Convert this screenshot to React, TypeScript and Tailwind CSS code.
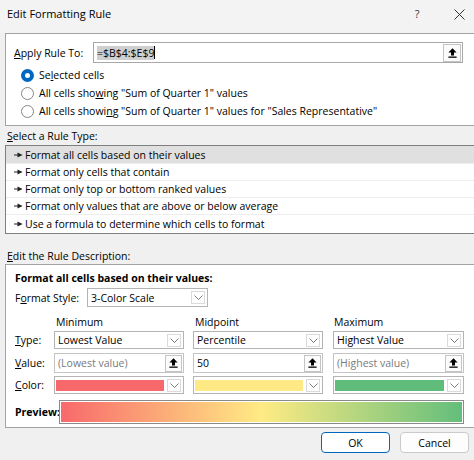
import React from 'react';

const Chevron = () => (
  <svg width="9" height="5" viewBox="0 0 9 5" fill="none">
    <path d="M0.5 0.5 L4.5 4.5 L8.5 0.5" stroke="#6b6b6b" strokeWidth="0.9" />
  </svg>
);

const UpArrow = () => (
  <svg width="9" height="10" viewBox="0 0 9 10">
    <path d="M4.5 0.3 L8.6 4.6 H6 V7.4 H3 V4.6 H0.4 Z" fill="#000" />
    <rect x="0.4" y="8.5" width="8.2" height="1.3" fill="#000" />
  </svg>
);

const Pointer = () => (
  <svg width="9" height="6" viewBox="0 0 9 6">
    <rect x="0" y="2.5" width="4" height="1" fill="#222" />
    <path d="M3.5 0.6 L8.6 3 L3.5 5.4 Z" fill="#222" />
  </svg>
);

const Dropdown = ({ value, width }: { value: string; width: string }) => (
  <div className={`flex items-center h-full bg-white border border-[#b4b4b4] pl-[3px] pr-[2px] ${width}`}>
    <span className="flex-1 truncate">{value}</span>
    <span className="w-[14px] h-[13px] border border-[#dadada] flex items-center justify-center">
      <Chevron />
    </span>
  </div>
);

const ValueBox = ({ value, muted }: { value: string; muted?: boolean }) => (
  <div className="flex items-center h-full w-full bg-white border border-[#c4c4c4] pl-[3px] pr-[1px]">
    <span className={`flex-1 truncate ${muted ? 'text-[#7a7a7a]' : ''}`}>{value}</span>
    <span className="w-[17px] h-[17px] border border-[#c4c4c4] bg-[#fbfbfb] flex items-center justify-center">
      <UpArrow />
    </span>
  </div>
);

const ColorBox = ({ color }: { color: string }) => (
  <div className="flex items-center h-full w-full bg-white border border-[#b4b4b4] pl-[1px] pr-[2px]">
    <span className={`flex-1 h-[11px] ${color}`} />
    <span className="ml-[3px] w-[14px] h-[13px] border border-[#dadada] flex items-center justify-center">
      <Chevron />
    </span>
  </div>
);

const Radio = ({ checked, children }: { checked?: boolean; children: React.ReactNode }) => (
  <div className="flex items-center h-[18px] pl-[7px]">
    {checked ? (
      <span className="w-[13px] h-[13px] rounded-full bg-[#0067c0] flex items-center justify-center">
        <span className="w-[5px] h-[5px] rounded-full bg-white" />
      </span>
    ) : (
      <span className="w-[13px] h-[13px] rounded-full border border-[#858585] bg-white" />
    )}
    <span className="ml-[5px]">{children}</span>
  </div>
);

const ruleTypes = [
  'Format all cells based on their values',
  'Format only cells that contain',
  'Format only top or bottom ranked values',
  'Format only values that are above or below average',
  'Use a formula to determine which cells to format',
];

export default function App() {
  return (
    <div className="w-[474px] h-[460px] overflow-hidden bg-[#f0f0f0] text-black text-[10.5px] leading-[14px] font-['Open_Sans','Noto_Sans',sans-serif] flex flex-col">
      {/* title bar */}
      <div className="h-[33px] shrink-0 flex items-center pl-[7px] pr-[9px] pb-[5px] bg-[#f3f3f3]">
        <span className="text-[11px]">Edit Formatting Rule</span>
        <span className="ml-auto w-[14px] text-center text-[11px] text-[#333]">?</span>
        <span className="ml-[29px] w-[12px] flex items-center justify-center">
          <svg width="11" height="11" viewBox="0 0 11 11">
            <path d="M0.5 0.5 L10.5 10.5 M10.5 0.5 L0.5 10.5" stroke="#333" strokeWidth="1" />
          </svg>
        </span>
      </div>

      {/* apply to */}
      <div className="ml-[5px] h-[93px] shrink-0 border-y border-l border-[#a3a3a3] bg-white pt-[8px] pl-[8px]">
        <div className="flex items-center h-[21px]">
          <span className="w-[79px]">
            <u>A</u>pply Rule To:
          </span>
          <div className="flex-1 mr-[11px] h-full flex items-center border border-[#a8a8a8] bg-white pl-[3px] pr-[1px]">
            <span className="bg-[#cfcfcf]">=$B$4:$E$9</span>
            <span className="w-px h-[13px] bg-black" />
            <span className="flex-1" />
            <span className="w-[18px] h-[18px] border border-[#c4c4c4] bg-[#fbfbfb] flex items-center justify-center">
              <UpArrow />
            </span>
          </div>
        </div>
        <div className="mt-[3px]">
          <Radio checked>
            Se<u>l</u>ected cells
          </Radio>
          <Radio>
            All cells sho<u>w</u>ing "Sum of Quarter 1" values
          </Radio>
          <Radio>
            All cells showi<u>n</u>g "Sum of Quarter 1" values for "Sales Representative"
          </Radio>
        </div>
      </div>

      {/* rule type */}
      <div className="h-[19px] shrink-0 flex items-center pl-[7px]">
        <span>
          <u>S</u>elect a Rule Type:
        </span>
      </div>
      <div className="ml-[5px] shrink-0 border-y border-l border-[#7f7f7f] bg-white">
        {ruleTypes.map((t, i) => (
          <div
            key={t}
            className={`flex items-center pl-[8px] gap-[2px] ${i === 0 || i === 4 ? 'h-[18px]' : 'h-[17px]'} ${
              i === 0 ? 'bg-[#e0e0e0]' : ''
            } ${i < 4 ? 'border-b border-[#ededed]' : ''}`}
          >
            <Pointer />
            <span>{t}</span>
          </div>
        ))}
      </div>

      <div className="h-[30px] shrink-0 flex items-end pl-[7px] pb-[1px]">
        <span>
          <u>E</u>dit the Rule Description:
        </span>
      </div>

      {/* description */}
      <div className="ml-[5px] h-[164px] shrink-0 border-y border-l border-[#a3a3a3] bg-white pt-[6px] pl-[9px] flex flex-col">
        <div className="h-[14px] font-bold">Format all cells based on their values:</div>
        <div className="mt-[3px] h-[19px] flex items-center">
          <span className="w-[72px]">
            F<u>o</u>rmat Style:
          </span>
          <Dropdown value="3-Color Scale" width="w-[121px]" />
        </div>

        <div className="mt-[8px] h-[14px] flex">
          <span className="w-[39px]" />
          <span className="w-[130px] pl-[2px]">Minimum</span>
          <span className="w-[130px] ml-[9px] pl-[2px]">Midpoint</span>
          <span className="w-[131px] ml-[10px] pl-[1px]">Maximum</span>
        </div>

        <div className="mt-[2px] h-[18px] flex items-center">
          <span className="w-[39px]">
            <u>T</u>ype:
          </span>
          <Dropdown value="Lowest Value" width="w-[130px]" />
          <span className="ml-[9px] h-full">
            <Dropdown value="Percentile" width="w-[130px]" />
          </span>
          <span className="ml-[10px] h-full">
            <Dropdown value="Highest Value" width="w-[131px]" />
          </span>
        </div>

        <div className="mt-[4px] h-[20px] flex items-center">
          <span className="w-[39px]">
            <u>V</u>alue:
          </span>
          <span className="w-[130px] h-full">
            <ValueBox value="(Lowest value)" muted />
          </span>
          <span className="w-[130px] ml-[9px] h-full">
            <ValueBox value="50" />
          </span>
          <span className="w-[131px] ml-[10px] h-full">
            <ValueBox value="(Highest value)" muted />
          </span>
        </div>

        <div className="mt-[3px] h-[18px] flex items-center">
          <span className="w-[39px]">
            <u>C</u>olor:
          </span>
          <span className="w-[130px] h-full">
            <ColorBox color="bg-[#f8696b]" />
          </span>
          <span className="w-[130px] ml-[9px] h-full">
            <ColorBox color="bg-[#ffe984]" />
          </span>
          <span className="w-[131px] ml-[10px] h-full">
            <ColorBox color="bg-[#5fbc7a]" />
          </span>
        </div>

        <div className="mt-[6px] h-[24px] flex items-center">
          <span className="w-[44px] font-bold">Preview:</span>
          <div className="flex-1 mr-[10px] h-full border border-[#8a8a8a] bg-white p-[1px]">
            <div className="w-full h-full bg-[linear-gradient(to_right,#f8696b,#ffeb84,#63be7b)]" />
          </div>
        </div>
      </div>

      {/* buttons */}
      <div className="mt-[4px] h-[21px] shrink-0 flex justify-end pr-[5px] gap-[10px]">
        <button className="w-[69px] h-full rounded-[4px] border-[1.5px] border-[#0067c0] bg-white flex items-center justify-center">
          OK
        </button>
        <button className="w-[69px] h-full rounded-[4px] border border-[#cacaca] bg-[#fdfdfd] flex items-center justify-center">
          Cancel
        </button>
      </div>
    </div>
  );
}
